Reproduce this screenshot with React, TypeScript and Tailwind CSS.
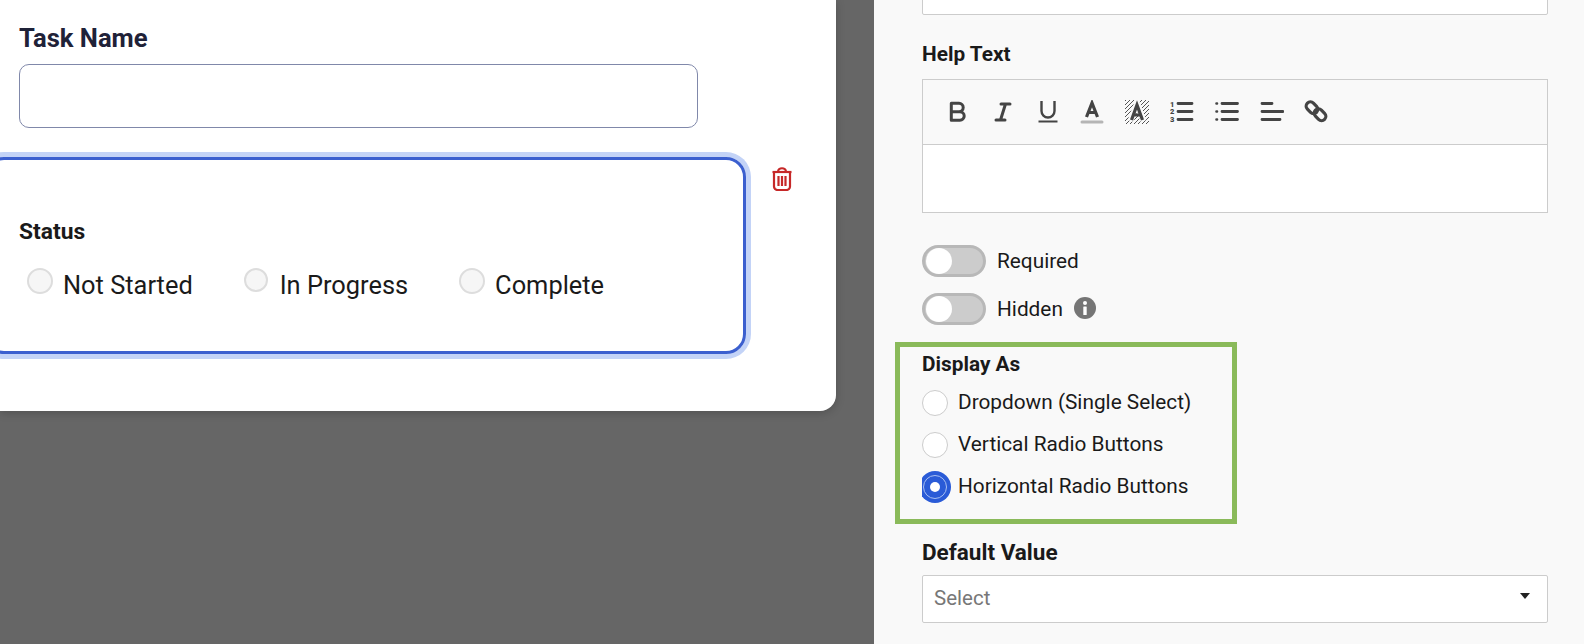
const iconColor = "#444444";

const ToolbarIcons = () => (
	<div className="flex gap-[20.8px] pl-[23px] pt-[20px] h-[65px] bg-[#f9f9f9] border-b border-[#cccccc]">
		<svg width="24" height="24" viewBox="0 0 24 24" fill="none" stroke={iconColor} strokeWidth="3">
			<path d="M5.300 3.300h7.700a4.200 4.200 0 0 1 0 8.400H5.300zM5.300 11.700h8.600a4.300 4.300 0 0 1 0 8.600H5.300z" strokeLinejoin="round" />
		</svg>
		<svg width="24" height="24" viewBox="0 0 24 24" fill="none" stroke={iconColor} strokeWidth="3" strokeLinecap="round">
			<path d="M10 4h9M5 20h9M14.500 4 9.500 20" />
		</svg>
		<svg width="24" height="24" viewBox="0 0 24 24" fill="none" stroke={iconColor}>
			<path d="M5.500 1v10a6.500 6.500 0 0 0 13 0V1" strokeWidth="2.400" />
			<path d="M2.500 21.500h19" strokeWidth="2" />
		</svg>
		<svg width="24" height="24" viewBox="0 0 24 24" fill="none">
			<path d="M6.500 17 12 3l5.500 14M8.500 12.500h7" stroke={iconColor} strokeWidth="3.200" />
			<path d="M2 22h20" stroke="#b5b5b5" strokeWidth="3" strokeLinecap="round" />
		</svg>
		<svg width="24" height="24" viewBox="0 0 24 24" fill="none">
			<defs>
				<pattern id="hatch" width="4" height="4" patternUnits="userSpaceOnUse">
					<rect width="1" height="1" fill="#555555" />
					<rect x="1" y="3" width="1" height="1" fill="#555555" />
					<rect x="2" y="2" width="1" height="1" fill="#555555" />
					<rect x="3" y="1" width="1" height="1" fill="#555555" />
				</pattern>
			</defs>
			<rect width="24" height="24" fill="url(#hatch)" />
			<path d="M5.500 21 12 3.500 18.500 21" stroke="#f9f9f9" strokeWidth="6" />
			<path d="M6.500 20 12 5l5.500 15M8.500 15h7" stroke={iconColor} strokeWidth="3.200" />
		</svg>
		<svg width="24" height="24" viewBox="0 0 24 24" fill="none">
			<text x="0" y="6.500" fontSize="7.500" fontWeight="900" fill={iconColor} fontFamily="Roboto, sans-serif">1</text>
			<text x="0" y="14" fontSize="7.500" fontWeight="900" fill={iconColor} fontFamily="Roboto, sans-serif">2</text>
			<text x="0" y="21.500" fontSize="7.500" fontWeight="900" fill={iconColor} fontFamily="Roboto, sans-serif">3</text>
			<path d="M8 3.500h14M8 11.500h14M8 19.500h14" stroke={iconColor} strokeWidth="2.800" strokeLinecap="round" />
		</svg>
		<svg width="24" height="24" viewBox="0 0 24 24" fill="none">
			<path d="M1.500 3.500h.5M1.500 11.500h.5M1.500 19.500h.5" stroke={iconColor} strokeWidth="2.600" strokeLinecap="round" />
			<path d="M7 3.500h15.500M7 11.500h15.500M7 19.500h15.500" stroke={iconColor} strokeWidth="2.800" strokeLinecap="round" />
		</svg>
		<svg width="24" height="24" viewBox="0 0 24 24" fill="none">
			<path d="M2 3.500h10M2 11.500h21M2 19.500h18" stroke={iconColor} strokeWidth="2.800" strokeLinecap="round" />
		</svg>
		<svg width="24" height="24" viewBox="0 0 24 24" fill="none" stroke={iconColor} strokeWidth="3.200">
			<rect x="1.500" y="3.500" width="13" height="8.500" rx="4.250" transform="rotate(45 8 7.750)" />
			<rect x="9.500" y="10.500" width="13" height="8.500" rx="4.250" transform="rotate(45 16 14.750)" />
		</svg>
	</div>
);

const TrashIcon = () => (
	<svg width="20" height="24" viewBox="0 0 20 24" fill="none" stroke="#c62828" strokeWidth="2.200">
		<path d="M0.500 5h19" />
		<path d="M6 5c0-5 8-5 8 0" />
		<path d="M2 5.500v14a3.500 3.500 0 0 0 3.500 3.500h9a3.500 3.500 0 0 0 3.500-3.500v-14" />
		<path d="M6.500 9v10M10 9v10M13.500 9v10" />
	</svg>
);

const InfoIcon = () => (
	<svg width="22" height="22" viewBox="0 0 22 22">
		<circle cx="11" cy="11" r="11" fill="#757575" />
		<circle cx="11" cy="6" r="2" fill="#ffffff" />
		<rect x="9.300" y="9.500" width="3.400" height="8.500" rx="0.500" fill="#ffffff" />
	</svg>
);

const Toggle = ({ label }: { label: string }) => (
	<div className="w-[64px] h-[32px] rounded-full bg-[#cccccc] border-[3px] border-[#b8b8b8] flex items-center shrink-0" aria-label={label}>
		<div className="w-[26px] h-[26px] rounded-full bg-white ml-[1px]" />
	</div>
);

const displayOptions = ["Dropdown (Single Select)", "Vertical Radio Buttons"];

export default function App() {
	return (
		<div className="flex h-[644px] w-[1584px] overflow-hidden bg-[#666666] font-['Roboto',sans-serif] text-[#1a1a1a]">
			<div className="w-[874px] shrink-0">
				<div className="w-[836px] h-[411px] bg-white rounded-br-2xl shadow-[0_2px_10px_rgba(0,0,0,0.2)] pt-[22px] overflow-hidden">
					<h2 className="ml-[19px] text-[25.600px] leading-[32px] font-bold text-[#1f2238]">Task Name</h2>
					<div className="ml-[19px] mt-[10px] w-[679px] h-[64px] rounded-[10px] border border-[#8088aa]" />
					<div className="flex items-start mt-[29px]">
						<div className="-ml-[16px] w-[762px] h-[197px] shrink-0 rounded-[20px] border-[3px] border-[#3b5fcf] shadow-[0_0_0_5px_#c3d3f7] pl-[33px] pt-[60px]">
							<div className="text-[22.800px] leading-[24px] font-bold -ml-[1px]">Status</div>
							<div className="flex items-start ml-[7px] mt-[24px] text-[25.400px] leading-[32px]">
								<span className="w-[26px] h-[26px] rounded-full bg-[#f6f6f6] border-2 border-[#dddddd] shrink-0" />
								<span className="ml-[10px] mt-[1px]">Not Started</span>
								<span className="w-[24px] h-[24px] rounded-full bg-[#f6f6f6] border-2 border-[#dddddd] shrink-0 ml-[51px]" />
								<span className="ml-[12px] mt-[1px]">In Progress</span>
								<span className="w-[26px] h-[26px] rounded-full bg-[#f6f6f6] border-2 border-[#dddddd] shrink-0 ml-[51px]" />
								<span className="ml-[10px] mt-[1px]">Complete</span>
							</div>
						</div>
						<div className="ml-[26px] mt-[10px]">
							<TrashIcon />
						</div>
					</div>
				</div>
			</div>
			<div className="w-[710px] bg-[#f9f9f9] pl-[48px] pr-[36px] text-[#1a1a1a]">
				<div className="h-[40px] -mt-[25px] bg-white border border-[#cccccc] rounded-[2px]" />
				<label className="block mt-[27px] text-[20.800px] leading-[24px] font-bold">Help Text</label>
				<div className="mt-[13px] border border-[#cccccc] bg-white h-[134px]">
					<ToolbarIcons />
				</div>
				<div className="mt-[32px] flex items-center gap-[11px] h-[32px] text-[20.800px]">
					<Toggle label="Required" />
					<span className="mt-[1px]">Required</span>
				</div>
				<div className="mt-[16px] flex items-center gap-[11px] h-[32px] text-[20.800px]">
					<Toggle label="Hidden" />
					<span className="mt-[1px]">Hidden</span>
					<span className="-mt-[3px] flex">
						<InfoIcon />
					</span>
				</div>
				<div className="mt-[17px] -ml-[27px] w-[342px] h-[182px] border-[5px] border-[#8aba5a] pl-[22px] pt-[5px]">
					<div className="text-[20.800px] leading-[24px] font-bold">Display As</div>
					{displayOptions.map((option, i) => (
						<div key={option} className={`flex items-center h-[26px] text-[20.800px] ${i === 0 ? "mt-[14px]" : "mt-[16px]"}`}>
							<span className="w-[26px] h-[26px] rounded-full bg-white border border-[#cccccc] shrink-0" />
							<span className="ml-[10px]">{option}</span>
						</div>
					))}
					<div className="flex items-center h-[32px] mt-[13px] text-[20.800px]">
						<span className="w-[29px] h-[32px] overflow-hidden shrink-0">
							<span className="block w-[32px] h-[32px] -ml-[3px] rounded-full bg-[#2a5bd7] flex items-center justify-center">
								<span className="w-[24px] h-[24px] rounded-full border border-[#a9c0f2] flex items-center justify-center">
									<span className="w-[10px] h-[10px] rounded-full bg-white" />
								</span>
							</span>
						</span>
						<span className="ml-[7px]">Horizontal Radio Buttons</span>
					</div>
				</div>
				<div className="mt-[16px] text-[22.500px] leading-[24px] font-bold">Default Value</div>
				<div className="mt-[11px] h-[48px] bg-white border border-[#cccccc] rounded-[2px] flex items-center justify-between pl-[11px] pr-[17px] text-[20.500px] text-[#777777]">
					<span className="-mt-[1px]">Select</span>
					<span className="w-0 h-0 border-x-[5px] border-x-transparent border-t-[6px] border-t-[#222222] -mt-[6px]" />
				</div>
			</div>
		</div>
	);
}
